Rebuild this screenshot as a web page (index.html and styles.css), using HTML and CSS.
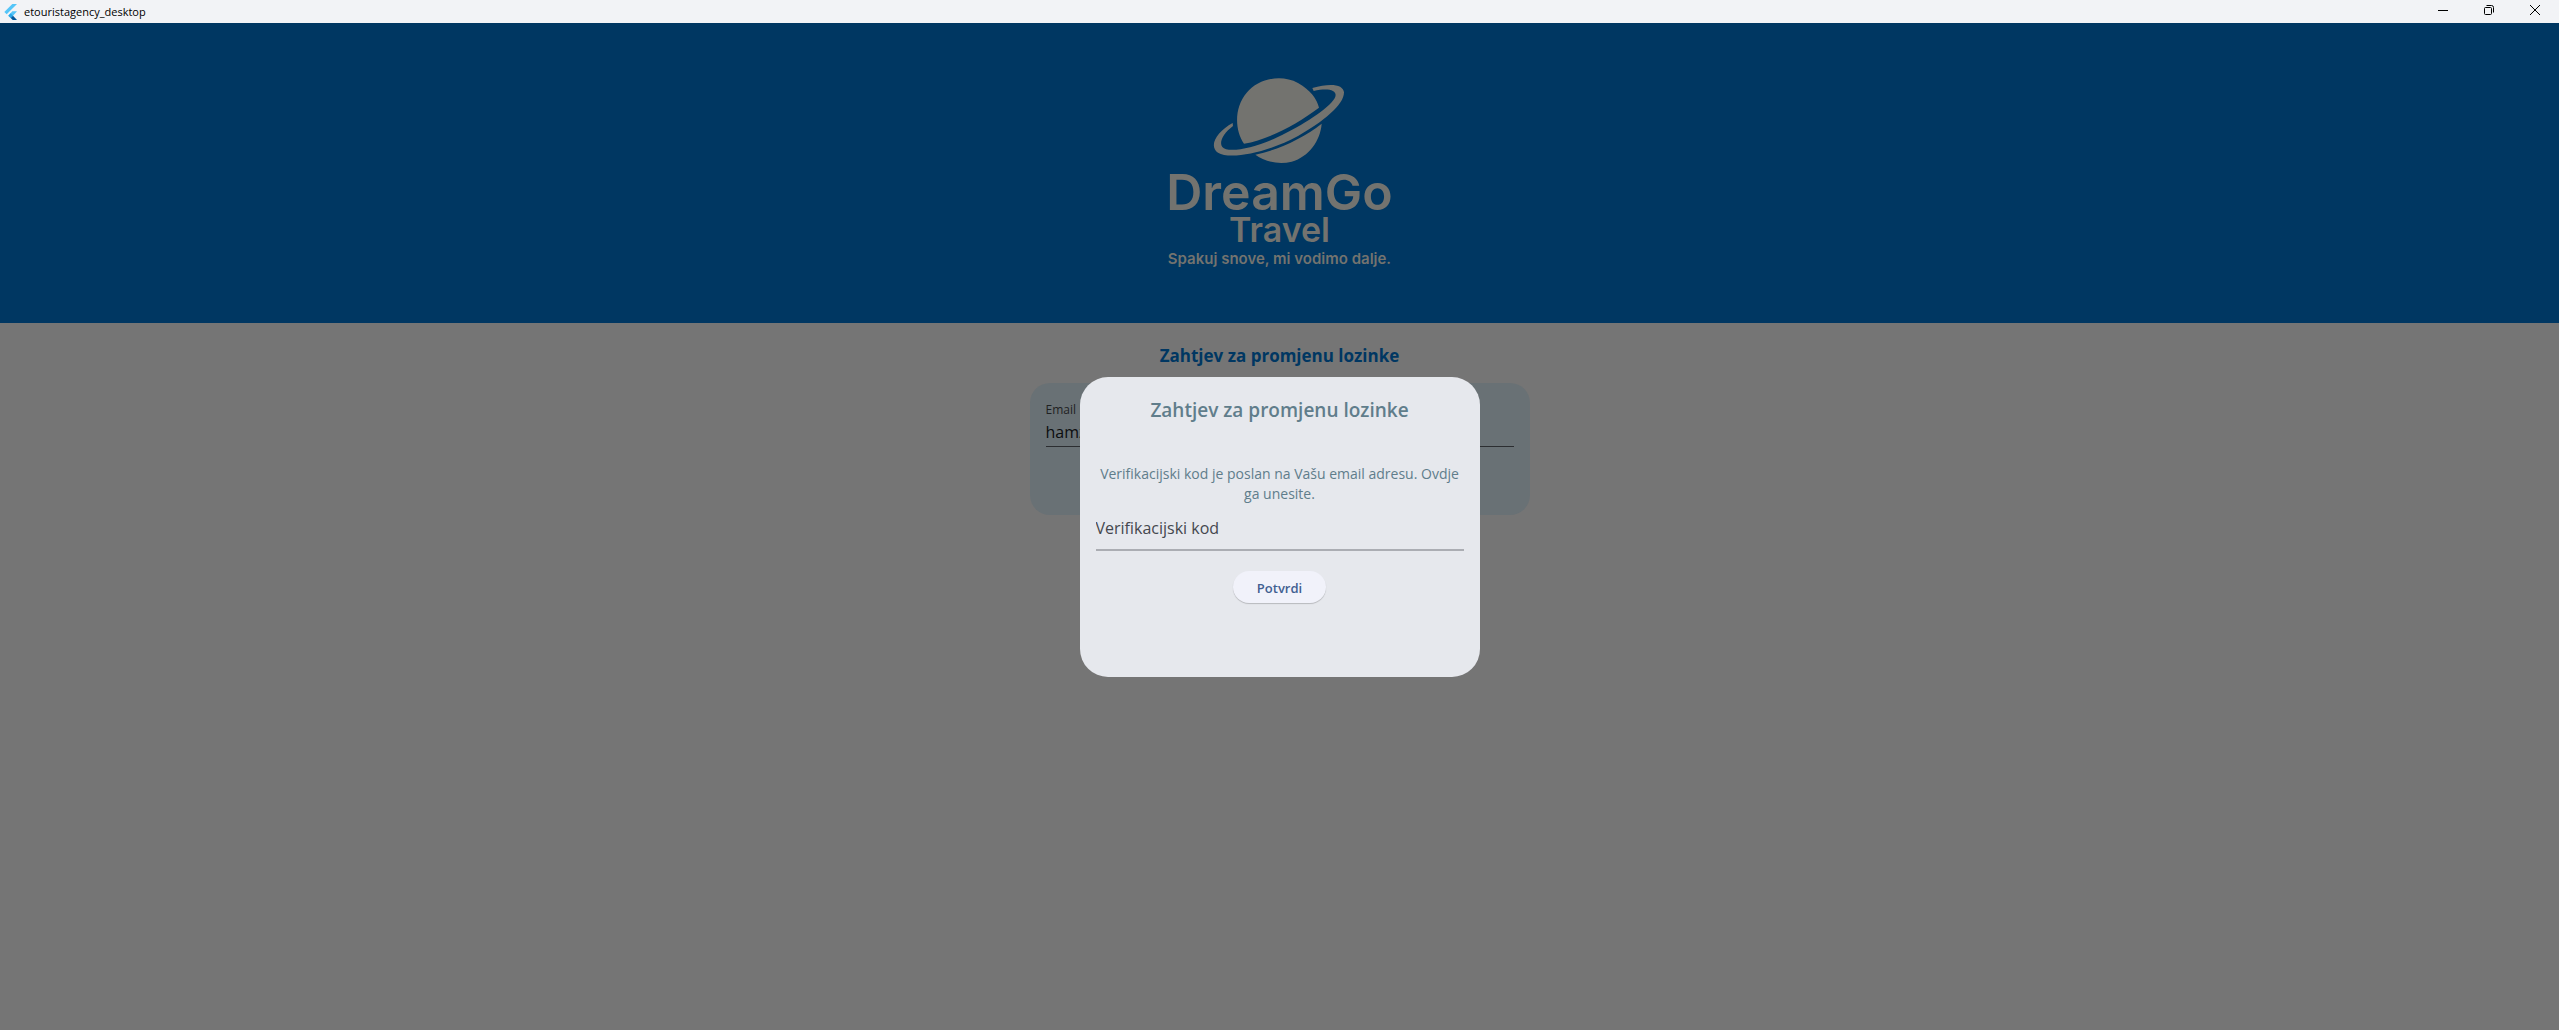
FILE: index.html
```html
<!DOCTYPE html>
<html lang="bs">
<head>
<meta charset="utf-8">
<title>etouristagency_desktop</title>
<link rel="stylesheet" href="styles.css">
</head>
<body>
<div class="titlebar">
  <svg class="app-icon" viewBox="0 0 40 48" aria-hidden="true">
    <path fill="#54c5f8" d="M24 0h14L7 31 0 24z"/>
    <path fill="#54c5f8" d="M24 22h14L26 35l-7 7-7-7z"/>
    <path fill="#29a7e8" d="M12 35l7-7 7 7-7 7z"/>
    <path fill="#01579b" d="M19 42l7-7 12 13H25z"/>
  </svg>
  <span class="app-name">etouristagency_desktop</span>
  <div class="window-controls">
    <button type="button" aria-label="Minimize"><svg viewBox="0 0 12 12"><path d="M1 6.5h10"/></svg></button>
    <button type="button" aria-label="Restore"><svg viewBox="0 0 12 12"><rect x="1.5" y="3.5" width="7" height="7" rx="1"/><path d="M3.5 1.5h5a2 2 0 0 1 2 2v5"/></svg></button>
    <button type="button" aria-label="Close"><svg viewBox="0 0 12 12"><path d="M1 1l10 10M11 1L1 11"/></svg></button>
  </div>
</div>
<div class="app">
  <header class="banner">
    <svg class="planet" viewBox="0 0 480 300" aria-hidden="true">
      <path d="M132 221C104 181 102 112 140 68C176 25 244 12 294 39C332 60 351 88 357 113C290 163 205 209 132 221Z"/>
      <path d="M365 161C361 212 327 260 275 275C232 286 190 272 166 254C235 240 310 204 365 161Z"/>
      <path d="M98 159L99 168C70 190 56 217 67 231C83 250 160 236 232 202C310 166 385 116 404 85C416 62 389 52 341 63L337 54C391 38 430 43 432 67C433 104 369 156 294 198C208 245 93 271 54 248C24 227 52 184 98 159Z"/>
    </svg>
    <div class="brand">DreamGo</div>
    <div class="brand-sub">Travel</div>
    <div class="tagline">Spakuj snove, mi vodimo dalje.</div>
  </header>
  <main class="page">
    <h1 class="page-title">Zahtjev za promjenu lozinke</h1>
    <form class="card">
      <label class="card-label" for="email">Email</label>
      <input class="card-input" id="email" type="text" value="hamz">
    </form>
  </main>
  <div class="dialog-layer">
    <form class="dialog" role="dialog" aria-labelledby="dialog-title">
      <h2 class="dialog-title" id="dialog-title">Zahtjev za promjenu lozinke</h2>
      <p class="dialog-text">Verifikacijski kod je poslan na Vašu email adresu. Ovdje ga unesite.</p>
      <input class="code-input" type="text" placeholder="Verifikacijski kod" aria-label="Verifikacijski kod">
      <button class="confirm" type="button">Potvrdi</button>
    </form>
  </div>
</div>
</body>
</html>
```
FILE: styles.css
```css
* { box-sizing: border-box; }
body {
  margin: 0;
  min-height: 100vh;
  display: flex;
  flex-direction: column;
  font-family: "Open Sans", "Noto Sans", sans-serif;
  background: #757575;
}
h1, h2, p { margin: 0; }
button, input { font-family: inherit; }

.titlebar {
  height: 23px;
  display: flex;
  align-items: center;
  gap: 6px;
  padding-left: 4px;
  background: #f2f3f6;
  color: #000;
}
.app-icon { width: 14px; height: 16px; }
.app-name { font-size: 11px; line-height: 16px; }
.window-controls { display: flex; margin-left: auto; }
.window-controls button {
  width: 46px;
  height: 23px;
  padding: 0 2px 3px 0;
  border: 0;
  background: none;
  display: grid;
  place-items: center;
}
.window-controls svg { width: 12px; height: 12px; fill: none; stroke: #000; }

.app { flex: 1; position: relative; display: flex; flex-direction: column; }

.banner {
  height: 300px;
  display: flex;
  flex-direction: column;
  align-items: center;
  padding-top: 47px;
  background: #003762;
  color: #73736f;
  font-family: Inter, sans-serif;
}
.planet { width: 160px; height: 100px; fill: #73736f; }
.brand { font-size: 50px; font-weight: 600; line-height: 44px; }
.brand-sub { font-size: 34px; font-weight: 600; line-height: 32px; }
.tagline { font-size: 15px; font-weight: 600; line-height: 26px; }

.page { display: flex; flex-direction: column; align-items: center; padding: 21px 16px; }
.page-title { font-size: 17px; line-height: 24px; color: #003762; }
.card {
  width: 100%;
  max-width: 500px;
  min-height: 132px;
  margin-top: 15px;
  padding: 19px 16px;
  border-radius: 20px;
  background: #697175;
  display: flex;
  flex-direction: column;
}
.card-label { font-size: 12px; line-height: 16px; color: #1f2123; }
.card-input {
  height: 29px;
  padding: 0;
  border: 0;
  border-bottom: 1px solid #2c2e31;
  background: none;
  font-size: 16px;
  color: #0c0d0f;
}

.dialog-layer { position: absolute; inset: 0; display: grid; place-items: center; }
.dialog {
  width: 400px;
  min-height: 300px;
  padding: 21px 16px;
  border-radius: 28px;
  background: #e6e8ed;
  display: flex;
  flex-direction: column;
  align-items: center;
}
.dialog-title { font-size: 19px; font-weight: 600; line-height: 24px; color: #607d8b; }
.dialog-text { margin-top: 42px; font-size: 14px; line-height: 20px; text-align: center; color: #607d8b; }
.code-input {
  width: 100%;
  height: 47px;
  padding: 4px 0 0;
  border: 0;
  border-bottom: 2px solid #abadb3;
  background: none;
  font-size: 16px;
  color: #44474e;
}
.code-input::placeholder { color: #44474e; opacity: 1; }
.confirm {
  height: 32px;
  margin-top: 20px;
  padding: 2px 24px 0;
  border: 0;
  border-radius: 16px;
  background: #f1f2fa;
  box-shadow: 0 1px 1px rgba(0, 0, 0, .2);
  color: #415f91;
  font-size: 13px;
  font-weight: 600;
}
```
